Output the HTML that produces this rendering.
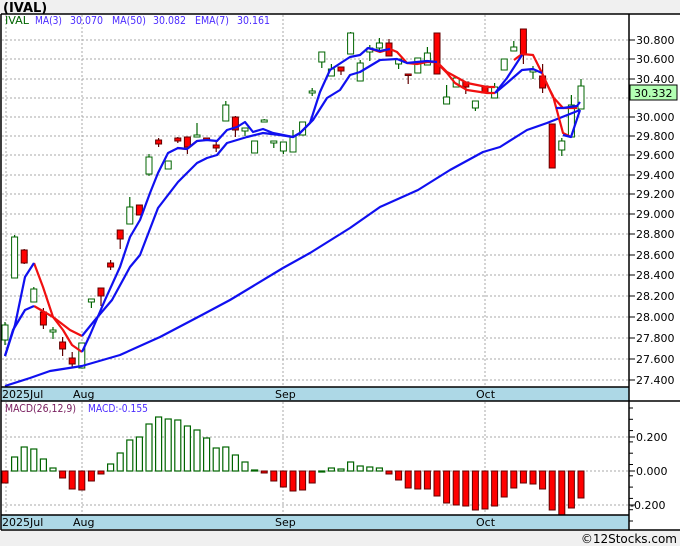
<!DOCTYPE html>
<html><head><meta charset="utf-8"><style>
html,body{margin:0;padding:0;background:#f0f0f0;width:680px;height:546px;overflow:hidden}
svg{display:block;font-family:"DejaVu Sans","Liberation Sans",sans-serif}
</style></head><body>
<svg width="680" height="546" viewBox="0 0 680 546" xmlns="http://www.w3.org/2000/svg">
<rect x="0" y="0" width="680" height="546" fill="#f0f0f0"/>
<text x="3" y="12" font-size="13" font-weight="bold" fill="#000">(IVAL)</text>
<rect x="1" y="14" width="679" height="516" fill="#fff"/>
<g id="grid" stroke="#aaa" stroke-dasharray="2,2" stroke-width="1">
</g>
<g id="cand"></g>
<g id="lines" fill="none" stroke-width="2.2" stroke-linejoin="round"></g>
<g id="macd"></g>
<rect x="1" y="387" width="628" height="14" fill="#add8e6"/>
<rect x="1" y="515" width="628" height="14" fill="#add8e6"/>
<g stroke="#000" stroke-width="1.5">
<line x1="1" y1="14" x2="680" y2="14"/>
<line x1="1" y1="14" x2="1" y2="530"/>
<line x1="629" y1="14" x2="629" y2="530"/>
<line x1="1" y1="387" x2="629" y2="387"/>
<line x1="1" y1="401" x2="680" y2="401"/>
<line x1="1" y1="515" x2="629" y2="515"/>
<line x1="1" y1="530" x2="680" y2="530"/>
</g>
<g font-size="11" fill="#000">
<text x="2" y="398">2025Jul</text><text x="73" y="398">Aug</text><text x="275" y="398">Sep</text><text x="476" y="398">Oct</text>
<text x="2" y="526">2025Jul</text><text x="73" y="526">Aug</text><text x="275" y="526">Sep</text><text x="476" y="526">Oct</text>
</g>
<g id="axis" font-size="11" fill="#000"></g>
<g font-size="11">
<text x="5" y="24" fill="#006400" textLength="24" lengthAdjust="spacingAndGlyphs">IVAL</text>
<text x="35" y="24" fill="#4b2bff" textLength="27" lengthAdjust="spacingAndGlyphs">MA(3)</text>
<text x="70" y="24" fill="#4b2bff" textLength="33" lengthAdjust="spacingAndGlyphs">30.070</text>
<text x="112" y="24" fill="#4b2bff" textLength="34" lengthAdjust="spacingAndGlyphs">MA(50)</text>
<text x="153" y="24" fill="#4b2bff" textLength="33" lengthAdjust="spacingAndGlyphs">30.082</text>
<text x="195" y="24" fill="#4b2bff" textLength="34" lengthAdjust="spacingAndGlyphs">EMA(7)</text>
<text x="237" y="24" fill="#4b2bff" textLength="33" lengthAdjust="spacingAndGlyphs">30.161</text>
<text x="5" y="412" fill="#7a2060" textLength="71" lengthAdjust="spacingAndGlyphs">MACD(26,12,9)</text>
<text x="88" y="412" fill="#4b2bff" textLength="60" lengthAdjust="spacingAndGlyphs">MACD:-0.155</text>
</g>
<rect x="630" y="85" width="47" height="15" fill="#b3ffb3" stroke="#000" stroke-width="1"/>
<text x="634" y="97" font-size="11" fill="#000">30.332</text>
<text x="677" y="543" font-size="12" fill="#000" text-anchor="end">©12Stocks.com</text>
</svg>
<script>
const NS="http://www.w3.org/2000/svg";
function el(p,t,a){const e=document.createElementNS(NS,t);for(const k in a)e.setAttribute(k,a[k]);document.getElementById(p).appendChild(e);return e;}
const py=[40,59,79,98,117,136,155,175,194,214,234,255,275,296,317,338,359,380];
const labels=["30.800","30.600","30.400","30.200","30.000","29.800","29.600","29.400","29.200","29.000","28.800","28.600","28.400","28.200","28.000","27.800","27.600","27.400"];
py.forEach((y,i)=>{el("grid","line",{x1:2,y1:y,x2:629,y2:y});el("axis","line",{x1:629,y1:y,x2:635,y2:y,stroke:"#000"});if(i!=3)el("axis","text",{x:636,y:y+4}).textContent=labels[i];});
[437,471,505].forEach((y,i)=>{el("grid","line",{x1:2,y1:y,x2:629,y2:y});el("axis","line",{x1:629,y1:y,x2:635,y2:y,stroke:"#000"});el("axis","text",{x:i==2?630:636,y:y+4}).textContent=["0.200","0.000","-0.200"][i];});
[6,82,283,485].forEach(x=>{el("grid","line",{x1:x,y1:15,x2:x,y2:387});el("grid","line",{x1:x,y1:402,x2:x,y2:515});});
for(let y=408;y<530;y+=11.3)el("axis","line",{x1:629,y1:y,x2:633,y2:y,stroke:"#000"});
const C=[["g",325,340,322,345],["g",237,278,235,278],["r",250,263,249,264],["g",289,302,287,302],["r",312,325,308,329],["g",330,332,327,339],["r",342,349,337,356],["r",358,364,352,368],["g",343,368,343,368],["g",299,302,299,308],["r",288,296,288,306],["r",263,267,260,270],["r",230,239,230,249],["g",207,224,197,224],["r",205,215,205,215],["g",157,174,154,176],["r",140,144,138,147],["g",161,169,161,169],["r",138,141,137,143],["r",137,147,137,154],["g",135,137,123,137],["r",138,140,138,140],["r",145,148,142,152],["g",105,121,101,121],["r",117,130,116,137],["g",128,131,128,136],["g",141,153,141,153],["g",120,122,119,122],["g",141,143,141,148],["g",142,151,142,154],["g",136,152,130,152],["g",122,135,122,135],["g",91,93,88,96],["g",52,62,52,68],["g",69,76,64,76],["r",67,71,67,75],["g",33,54,32,54],["g",63,81,60,81],["g",48,52,45,61],["g",43,48,38,52],["r",43,56,39,56],["g",59,64,59,69],["r",74,75,74,84],["g",58,73,58,73],["g",53,65,47,65],["r",33,74,33,74],["g",97,104,85,104],["g",78,87,78,87],["r",82,87,82,94],["g",101,108,101,111],["r",86,93,86,93],["g",87,98,83,98],["g",59,70,59,70],["g",47,51,41,51],["r",29,55,29,64],["g",70,72,66,79],["r",76,88,64,93],["r",124,168,124,168],["g",141,150,138,156],["g",105,137,95,137],["g",86,109,79,109]];
C.forEach((c,i)=>{const x=5+9.6*i;const g=c[0]=="g";const s=g?"#006400":"#600000";
el("cand","line",{x1:x,y1:c[3],x2:x,y2:c[4],stroke:s,"stroke-width":1.2});
el("cand","rect",{x:x-3,y:c[1],width:6,height:Math.max(c[2]-c[1],1.5),fill:g?"#fff":"#f00",stroke:s,"stroke-width":1});});
function pl(pts,col){el("lines","polyline",{points:pts.map(p=>p.join(",")).join(" "),stroke:col});}
pl([[5,386],[30,378],[50,371],[82,366],[120,355],[160,337],[200,316],[230,300],[283,268],[310,253],[350,228],[380,207],[418,190],[450,170],[483,152],[500,147],[527,130],[547,123],[580,110]],"#1010f0");
pl([[34,263],[43,287],[53,317],[63,330],[72,345],[82,352]],"#f01010");
pl([[34,306],[53,317],[70,330],[82,336]],"#f01010");
pl([[177,148],[187,149],[197,141]],"#f01010");
pl([[368,48],[380,52],[390,49],[397,52],[407,63],[417,64],[427,62],[437,62],[447,72],[467,83],[487,87],[495,87]],"#f01010");
pl([[437,63],[447,73],[455,83],[467,90],[487,93],[495,93]],"#f01010");
pl([[514,60],[522,54],[533,55],[542,73],[553,97],[563,108],[577,108]],"#f01010");
pl([[542,75],[553,96],[563,133],[571,137]],"#f01010");
pl([[5,356],[15,325],[25,277],[34,263]],"#1010f0");
pl([[5,356],[13,330],[25,310],[34,306]],"#1010f0");
pl([[82,352],[90,335],[105,300],[120,267],[130,237],[140,220],[150,193],[158,173],[168,153],[178,148],[187,149],[197,141],[207,140],[217,141],[227,130],[237,127],[245,122],[253,132],[263,129],[273,133],[283,135],[293,137],[300,133],[310,123],[320,92],[330,70],[350,57],[360,55],[368,48],[380,51],[390,49]],"#1010f0");
pl([[82,336],[95,320],[112,300],[130,267],[140,255],[158,208],[178,182],[197,163],[207,158],[217,155],[227,143],[247,137],[263,133],[280,135],[293,137],[300,133],[313,120],[327,98],[340,90],[350,75],[360,72],[380,60],[397,59],[407,63],[417,62],[427,61],[437,62]],"#1010f0");
pl([[495,93],[507,78],[522,55]],"#1010f0");
pl([[495,93],[507,83],[522,70],[533,69],[542,73]],"#1010f0");
pl([[556,108],[563,108],[577,106],[580,102]],"#1010f0");
pl([[563,135],[571,137],[580,110]],"#1010f0");
const M=[-483,457,447,449,459,468,-478,-489,-490,-481,-474,464,453,440,437,424,417,419,420,426,430,438,448,447,455,462,470,-473,-481,-487,-491,-490,-483,471,468,469,462,466,467,468,-474,-480,-488,-489,-489,-496,-503,-505,-506,-510,-509,-506,-497,-488,-483,-484,-489,-510,-515,-508,-498];
M.forEach((v,i)=>{const x=5+9.6*i;const r=v<0;const y=Math.abs(v);
if(r)el("macd","rect",{x:x-3,y:471,width:6,height:Math.max(y-471,1),fill:"#f00",stroke:"#600000","stroke-width":1});
else el("macd","rect",{x:x-3,y:y,width:6,height:Math.max(471-y,1),fill:"#fff",stroke:"#006400","stroke-width":1.2});});
</script>
</body></html>
